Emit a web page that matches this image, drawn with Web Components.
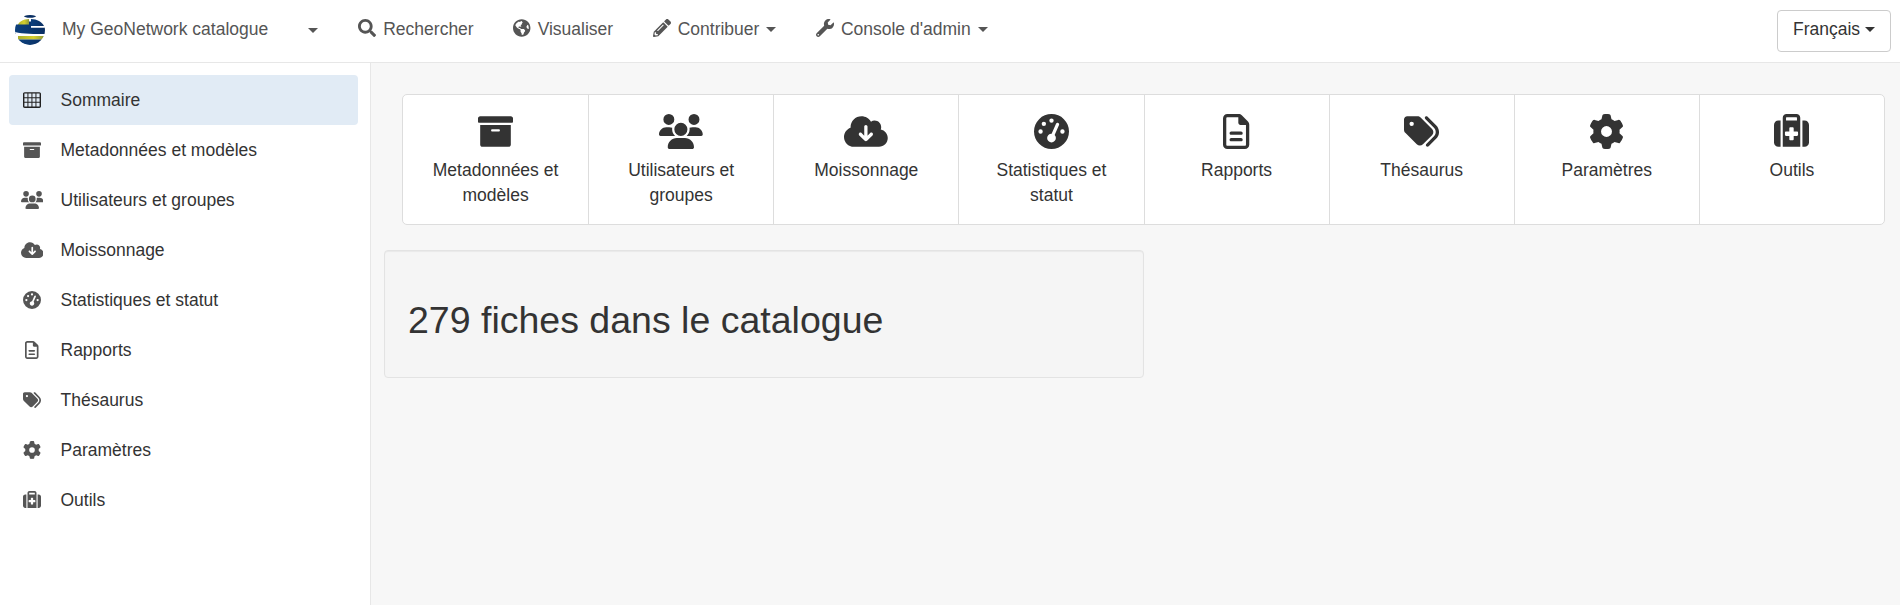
<!DOCTYPE html>
<html lang="fr">
<head>
<meta charset="utf-8">
<title>My GeoNetwork catalogue</title>
<style>
html, body { margin: 0; height: 100%; background: #f7f7f7; }
body { font: 17.5px/25px "Liberation Sans", Arial, sans-serif; color: #333; }
</style>
</head>
<body>
<gn-app>
  <gn-navbar slot="top">
    <gn-nav-item icon="search">Rechercher</gn-nav-item>
    <gn-nav-item icon="globe">Visualiser</gn-nav-item>
    <gn-nav-item icon="pencil" caret>Contribuer</gn-nav-item>
    <gn-nav-item icon="wrench" caret>Console d'admin</gn-nav-item>
  </gn-navbar>
  <gn-sidebar slot="side">
    <gn-side-item icon="table" active>Sommaire</gn-side-item>
    <gn-side-item icon="archive">Metadonnées et modèles</gn-side-item>
    <gn-side-item icon="users">Utilisateurs et groupes</gn-side-item>
    <gn-side-item icon="cloud">Moissonnage</gn-side-item>
    <gn-side-item icon="gauge">Statistiques et statut</gn-side-item>
    <gn-side-item icon="file">Rapports</gn-side-item>
    <gn-side-item icon="tags">Thésaurus</gn-side-item>
    <gn-side-item icon="gear">Paramètres</gn-side-item>
    <gn-side-item icon="case">Outils</gn-side-item>
  </gn-sidebar>
  <gn-tiles>
    <gn-tile icon="archive">Metadonnées et modèles</gn-tile>
    <gn-tile icon="users">Utilisateurs et groupes</gn-tile>
    <gn-tile icon="cloud">Moissonnage</gn-tile>
    <gn-tile icon="gauge">Statistiques et statut</gn-tile>
    <gn-tile icon="file">Rapports</gn-tile>
    <gn-tile icon="tags">Thésaurus</gn-tile>
    <gn-tile icon="gear">Paramètres</gn-tile>
    <gn-tile icon="case">Outils</gn-tile>
  </gn-tiles>
  <gn-well>279 fiches dans le catalogue</gn-well>
</gn-app>

<script>
const ICONS = {
  search: [512, 'M505 442.7L405.3 343c-4.5-4.5-10.6-7-17-7H372c27.6-35.3 44-79.7 44-128C416 93.1 322.9 0 208 0S0 93.1 0 208s93.1 208 208 208c48.3 0 92.7-16.4 128-44v16.3c0 6.4 2.5 12.5 7 17l99.7 99.7c9.4 9.4 24.6 9.4 33.9 0l28.3-28.3c9.4-9.4 9.4-24.6.1-34zM208 336c-70.7 0-128-57.2-128-128 0-70.7 57.2-128 128-128 70.7 0 128 57.2 128 128 0 70.7-57.2 128-128 128z'],
  globe: [496, 'M248 8C111.03 8 0 119.03 0 256s111.03 248 248 248 248-111.03 248-248S384.97 8 248 8zm82.29 357.6c-3.9 3.88-7.99 7.95-11.31 11.28-2.99 3-5.1 6.7-6.17 10.71-1.51 5.66-2.73 11.38-4.77 16.87l-17.39 46.85c-13.76 3-28 4.69-42.65 4.69v-27.38c1.69-12.62-7.64-36.26-22.63-51.25-6-6-9.37-14.14-9.37-22.63v-32.01c0-11.64-6.27-22.34-16.46-27.97-14.37-7.95-34.81-19.06-48.81-26.11-11.48-5.78-22.1-13.14-31.65-21.75l-.8-.72a114.792 114.792 0 0 1-18.06-20.74c-9.38-13.77-24.66-36.42-34.59-51.14 20.47-45.5 57.36-82.04 103.2-101.89l24.01 12.01C203.48 89.74 216 82.01 216 70.11v-11.3c7.99-1.29 16.12-2.11 24.39-2.42l28.3 28.3c6.25 6.25 6.25 16.38 0 22.63L264 112l-10.34 10.34c-3.12 3.12-3.12 8.19 0 11.31l4.69 4.69c3.12 3.12 3.12 8.19 0 11.31l-8 8a8.008 8.008 0 0 1-5.66 2.34h-8.99c-2.08 0-4.08.81-5.58 2.27l-9.92 9.65a8.008 8.008 0 0 0-1.58 9.31l15.59 31.19c2.66 5.32-1.21 11.58-7.15 11.58h-5.64c-1.93 0-3.79-.7-5.24-1.96l-9.28-8.06a16.017 16.017 0 0 0-15.55-3.1l-31.17 10.39a11.95 11.95 0 0 0-8.17 11.34c0 4.53 2.56 8.66 6.61 10.69l11.08 5.54c9.41 4.71 19.79 7.16 30.31 7.16s22.59 27.29 32 32h66.75c8.49 0 16.62 3.37 22.63 9.37l13.69 13.69a30.503 30.503 0 0 1 8.93 21.57 46.536 46.536 0 0 1-13.72 32.98zM417 274.25c-5.79-1.45-10.84-5-14.15-9.97l-17.98-26.97a23.97 23.97 0 0 1 0-26.62l19.59-29.38c2.32-3.47 5.5-6.29 9.24-8.15l12.98-6.49C440.2 193.59 448 223.87 448 256c0 8.67-.74 17.16-1.82 25.54L417 274.25z'],
  pencil: [512, 'M497.9 142.1l-46.1 46.1c-4.7 4.7-12.3 4.7-17 0l-111-111c-4.7-4.7-4.7-12.3 0-17l46.1-46.1c18.7-18.7 49.1-18.7 67.9 0l60.1 60.1c18.8 18.7 18.8 49.1 0 67.9zM284.2 99.8L21.6 362.4.4 483.9c-2.9 16.4 11.4 30.6 27.8 27.8l121.5-21.3 262.6-262.6c4.7-4.7 4.7-12.3 0-17l-111-111c-4.8-4.7-12.4-4.7-17.1 0zM124.1 339.9c-5.5-5.5-5.5-14.3 0-19.8l154-154c5.5-5.5 14.3-5.5 19.8 0s5.5 14.3 0 19.8l-154 154c-5.5 5.5-14.3 5.5-19.8 0zM88 424h48v36.3l-64.5 11.3-31.1-31.1L51.7 376H88v48z'],
  wrench: [512, 'M507.73 109.1c-2.24-9.03-13.54-12.09-20.12-5.51l-74.36 74.36-67.88-11.31-11.31-67.88 74.36-74.36c6.62-6.62 3.43-17.9-5.66-20.16-47.38-11.74-99.55.91-136.58 37.93-39.64 39.64-50.55 97.1-34.05 147.2L18.74 402.76c-24.99 24.99-24.99 65.51 0 90.5 24.99 24.99 65.51 24.99 90.5 0l213.21-213.21c50.12 16.71 107.47 5.68 147.37-34.22 37.07-37.07 49.7-89.32 37.91-136.73zM64 472c-13.25 0-24-10.75-24-24 0-13.26 10.75-24 24-24s24 10.74 24 24c0 13.25-10.75 24-24 24z'],
  table: [512, 'M48 32C21.500 32 0 53.500 0 80V432c0 26.500 21.500 48 48 48H464c26.500 0 48-21.500 48-48V80c0-26.500-21.500-48-48-48H48zM40 72h86v104H40V72zm114 0h86v104H154V72zm114 0h86v104H268V72zm114 0h90v104H382V72zM40 204h86v104H40V204zm114 0h86v104H154V204zm114 0h86v104H268V204zm114 0h90v104H382V204zM40 336h86v104H40V336zm114 0h86v104H154V336zm114 0h86v104H268V336zm114 0h90v104H382V336z'],
  archive: [512, 'M32 448c0 17.7 14.3 32 32 32h384c17.7 0 32-14.3 32-32V160H32v288zm160-212c0-6.6 5.4-12 12-12h104c6.6 0 12 5.4 12 12v8c0 6.6-5.4 12-12 12H204c-6.6 0-12-5.4-12-12v-8zM480 32H32C14.3 32 0 46.3 0 64v48c0 8.8 7.2 16 16 16h480c8.8 0 16-7.2 16-16V64c0-17.7-14.3-32-32-32z'],
  users: [640, 'M144 0a80 80 0 1 1 0 160A80 80 0 1 1 144 0zM512 0a80 80 0 1 1 0 160A80 80 0 1 1 512 0zM0 298.7C0 239.8 47.8 192 106.7 192h42.7c15.9 0 31 3.5 44.6 9.7c-1.3 7.2-1.9 14.7-1.9 22.3c0 38.2 16.8 72.5 43.3 96c-.2 0-.4 0-.7 0H21.3C9.6 320 0 310.4 0 298.7zM405.3 320c-.2 0-.4 0-.7 0c26.6-23.5 43.3-57.8 43.3-96c0-7.6-.7-15-1.9-22.3c13.6-6.3 28.7-9.7 44.6-9.7h42.7C592.2 192 640 239.8 640 298.7c0 11.8-9.6 21.3-21.3 21.3H405.3zM224 224a96 96 0 1 1 192 0 96 96 0 1 1 -192 0zM128 485.3C128 411.7 187.7 352 261.3 352H378.7C452.3 352 512 411.7 512 485.3c0 14.7-11.9 26.7-26.7 26.7H154.7c-14.7 0-26.7-11.9-26.7-26.7z'],
  cloud: [640, 'M144 480C64.5 480 0 415.5 0 336c0-62.8 40.2-116.2 96.2-135.9c-.1-2.7-.2-5.4-.2-8.1c0-88.4 71.6-160 160-160c59.3 0 111 32.2 138.7 80.2C409.9 102 428.3 96 448 96c53 0 96 43 96 96c0 12.2-2.3 23.8-6.4 34.6C596 238.4 640 290.1 640 352c0 70.7-57.3 128-128 128H144zm79-167l80 80c9.4 9.4 24.6 9.4 33.9 0l80-80c9.4-9.4 9.4-24.6 0-33.9s-24.6-9.4-33.9 0l-39 39V184c0-13.3-10.7-24-24-24s-24 10.7-24 24V318.1l-39-39c-9.4-9.4-24.6-9.4-33.9 0s-9.4 24.6 0 33.9z'],
  gauge: [512, 'M0 256a256 256 0 1 1 512 0A256 256 0 1 1 0 256zM288 96a32 32 0 1 0 -64 0 32 32 0 1 0 64 0zM256 416c35.3 0 64-28.7 64-64c0-17.4-6.9-33.1-18.1-44.6L366 161.7c5.3-12.1-.2-26.3-12.3-31.6s-26.3 .2-31.6 12.3L257.9 288c-.6 0-1.3 0-1.9 0c-35.3 0-64 28.7-64 64s28.7 64 64 64zM176 144a32 32 0 1 0 -64 0 32 32 0 1 0 64 0zM96 288a32 32 0 1 0 0-64 32 32 0 1 0 0 64zm352-32a32 32 0 1 0 -64 0 32 32 0 1 0 64 0z'],
  file: [384, 'M64 464c-8.8 0-16-7.2-16-16V64c0-8.8 7.2-16 16-16H224v80c0 17.7 14.3 32 32 32h80V448c0 8.8-7.2 16-16 16H64zM64 0C28.7 0 0 28.7 0 64V448c0 35.3 28.7 64 64 64H320c35.3 0 64-28.7 64-64V154.5c0-17-6.7-33.3-18.7-45.3L274.7 18.7C262.7 6.7 246.5 0 229.5 0H64zm56 256c-13.3 0-24 10.7-24 24s10.7 24 24 24H264c13.3 0 24-10.7 24-24s-10.7-24-24-24H120zm0 96c-13.3 0-24 10.7-24 24s10.7 24 24 24H264c13.3 0 24-10.7 24-24s-10.7-24-24-24H120z'],
  tags: [512, 'M345 39.1L472.8 168.4c52.4 53 52.4 138.2 0 191.2L360.8 472.9c-9.3 9.4-24.5 9.5-33.9 .2s-9.5-24.5-.2-33.9L438.6 325.9c33.9-34.3 33.9-89.4 0-123.7L310.9 72.9c-9.3-9.4-9.2-24.6 .2-33.9s24.6-9.2 33.9 .2zM0 229.5V80C0 53.5 21.5 32 48 32H197.5c17 0 33.3 6.7 45.3 18.7l168 168c25 25 25 65.5 0 90.5L277.3 442.7c-25 25-65.5 25-90.5 0l-168-168C6.7 262.7 0 246.5 0 229.5zM144 144a32 32 0 1 0 -64 0 32 32 0 1 0 64 0z'],
  gear: [512, 'M495.9 166.6c3.2 8.7 .5 18.4-6.4 24.6l-43.3 39.4c1.1 8.3 1.7 16.8 1.7 25.4s-.6 17.1-1.7 25.4l43.3 39.4c6.9 6.2 9.6 15.9 6.4 24.6c-4.4 11.9-9.7 23.3-15.8 34.3l-4.7 8.1c-6.6 11-14 21.4-22.1 31.2c-5.9 7.2-15.7 9.6-24.5 6.8l-55.7-17.7c-13.4 10.3-28.2 18.9-44 25.4l-12.5 57.1c-2 9.1-9 16.3-18.2 17.8c-13.8 2.3-28 3.5-42.5 3.5s-28.7-1.2-42.5-3.5c-9.2-1.5-16.2-8.7-18.2-17.8l-12.5-57.1c-15.8-6.5-30.6-15.1-44-25.4L83.1 425.9c-8.8 2.8-18.6 .3-24.5-6.8c-8.1-9.8-15.5-20.2-22.1-31.2l-4.7-8.1c-6.1-11-11.4-22.4-15.8-34.3c-3.2-8.7-.5-18.4 6.4-24.6l43.3-39.4C64.6 273.1 64 264.6 64 256s.6-17.1 1.7-25.4L22.4 191.2c-6.9-6.2-9.6-15.9-6.4-24.6c4.4-11.9 9.7-23.3 15.8-34.3l4.7-8.1c6.6-11 14-21.4 22.1-31.2c5.9-7.2 15.7-9.6 24.5-6.8l55.7 17.7c13.4-10.3 28.2-18.9 44-25.4l12.5-57.1c2-9.1 9-16.3 18.2-17.8C227.3 1.2 241.5 0 256 0s28.7 1.2 42.5 3.5c9.2 1.5 16.2 8.7 18.2 17.8l12.5 57.1c15.8 6.5 30.6 15.1 44 25.4l55.7-17.7c8.8-2.8 18.6-.3 24.5 6.8c8.1 9.8 15.5 20.2 22.1 31.2l4.7 8.1c6.1 11 11.4 22.4 15.8 34.3zM256 336a80 80 0 1 0 0-160 80 80 0 1 0 0 160z'],
  case: [512, 'M184 48H328c4.4 0 8 3.6 8 8V96H176V56c0-4.4 3.6-8 8-8zm-56 8V96v32V480H384V128 96 56c0-30.9-25.1-56-56-56H184c-30.9 0-56 25.1-56 56zM96 96H64C28.7 96 0 124.7 0 160V416c0 35.3 28.7 64 64 64H96V96zM416 480h32c35.3 0 64-28.7 64-64V160c0-35.3-28.7-64-64-64H416V480zM224 208c0-8.8 7.2-16 16-16h32c8.8 0 16 7.2 16 16v48h48c8.8 0 16 7.2 16 16v32c0 8.8-7.2 16-16 16H288v48c0 8.8-7.2 16-16 16H240c-8.8 0-16-7.2-16-16V320H176c-8.8 0-16-7.2-16-16V272c0-8.8 7.2-16 16-16h48V208z']
};

function svgIcon(name, height) {
  const [w, d] = ICONS[name];
  return `<svg viewBox="0 0 ${w} 512" width="${height * w / 512}" height="${height}" fill="currentColor" aria-hidden="true"><path d="${d}"/></svg>`;
}

const CARET = '<i style="display:inline-block;width:0;height:0;border-top:5px solid currentColor;border-left:5px solid transparent;border-right:5px solid transparent"></i>';

class GnApp extends HTMLElement {
  constructor() {
    super();
    this.attachShadow({ mode: 'open' }).innerHTML = `<style>
      :host { display: flex; flex-direction: column; height: 605px; overflow: hidden; }
      .body { display: flex; flex: 1; min-height: 0; }
      main { flex: 1; min-width: 0; padding-top: 31px; }
    </style>
    <slot name="top"></slot>
    <div class="body"><slot name="side"></slot><main><slot></slot></main></div>`;
  }
}

class GnNavbar extends HTMLElement {
  constructor() {
    super();
    this.attachShadow({ mode: 'open' }).innerHTML = `<style>
      :host { display: flex; align-items: center; height: 62px; flex: none; background: #fff; border-bottom: 1px solid #e7e7e7; color: #555; padding: 0 9px 0 15px; }
      .logo { width: 30px; height: 30px; flex: none; margin: 0 17px 2px 0; }
      .brand { margin-bottom: 4px; }
      .caret { display: flex; margin: 0 40px 1px 40px; }
      .items { display: flex; gap: 39.5px; flex: 1; margin-bottom: 4px; }
      button { font: inherit; color: #333; background: #fff; border: 1px solid #ccc; border-radius: 4px; height: 42px; width: 114px; padding: 0 0 3px; display: flex; align-items: center; justify-content: center; gap: 5px; }
    </style>
    <svg class="logo" viewBox="0 0 30 30" aria-hidden="true">
      <defs>
        <linearGradient id="b" x1="0" x2="1"><stop offset="0" stop-color="#0c3f7c"/><stop offset="1" stop-color="#0a2f63"/></linearGradient>
        <linearGradient id="y" x1="0" x2="1"><stop offset="0" stop-color="#a9ae2c"/><stop offset=".6" stop-color="#d6cf2e"/><stop offset="1" stop-color="#8f9a3a"/></linearGradient>
        <clipPath id="c"><circle cx="15" cy="15" r="15"/></clipPath>
      </defs>
      <g clip-path="url(#c)">
        <rect width="30" height="30" fill="#fff"/>
        <ellipse cx="15" cy="1" rx="6" ry="1.800" fill="#0a2f63"/>
        <path d="M2 12C3 7 8 4 14 4V10H2z" fill="url(#y)"/>
        <path d="M16 4C22 4 27 7 29 11H16z" fill="url(#b)"/>
        <path d="M0 9.500H14V6.500H16V12.500H30V19H0z" fill="url(#b)"/>
        <path d="M16 11H29L30 12.500H16z" fill="#fff"/>
        <path d="M0 17C8 19 20 19 30 19V20.500H0z" fill="#fff"/>
        <path d="M3 21H29L28.500 24.500H3z" fill="url(#y)"/>
        <path d="M3 24.500H29C26 28 21 30 15 30S6 28 3 24.500z" fill="url(#b)"/>
      </g>
    </svg>
    <span class="brand">My GeoNetwork catalogue</span>
    <span class="caret">${CARET}</span>
    <div class="items"><slot></slot></div>
    <button type="button">Français ${CARET}</button>`;
  }
}

class GnNavItem extends HTMLElement {
  constructor() {
    super();
    this.attachShadow({ mode: 'open' });
  }
  connectedCallback() {
    const caret = this.hasAttribute('caret') ? `<span class="caret">${CARET}</span>` : '';
    this.shadowRoot.innerHTML = `<style>
      :host { display: inline-flex; align-items: center; gap: 7px; color: #555; }
      svg { display: block; margin-bottom: 2px; }
      .caret { display: flex; margin-left: 0; }
    </style>${svgIcon(this.getAttribute('icon'), 18)}<span><slot></slot></span>${caret}`;
  }
}

class GnSidebar extends HTMLElement {
  constructor() {
    super();
    this.attachShadow({ mode: 'open' }).innerHTML = `<style>
      :host { display: flex; flex-direction: column; flex: none; box-sizing: border-box; width: 371px; background: #fff; border-right: 1px solid #e7e7e7; padding: 12px 12px 0 9px; }
    </style><slot></slot>`;
  }
}

class GnSideItem extends HTMLElement {
  constructor() {
    super();
    this.attachShadow({ mode: 'open' });
  }
  connectedCallback() {
    this.shadowRoot.innerHTML = `<style>
      :host { display: flex; align-items: center; height: 50px; flex: none; border-radius: 4px; }
      :host([active]) { background: #e1ebf5; }
      .ico { width: 46px; margin-right: 5.5px; display: flex; justify-content: center; color: #555; }
      :host([active]) .ico { color: #222; }
      svg { display: block; }
    </style><span class="ico">${svgIcon(this.getAttribute('icon'), 18)}</span><span><slot></slot></span>`;
  }
}

class GnTiles extends HTMLElement {
  constructor() {
    super();
    this.attachShadow({ mode: 'open' }).innerHTML = `<style>
      :host { display: grid; grid-template-columns: repeat(8, 1fr); margin: 0 15px 0 31px; background: #fff; border: 1px solid #ddd; border-radius: 5px; height: 131px; box-sizing: border-box; }
    </style><slot></slot>`;
  }
}

class GnTile extends HTMLElement {
  constructor() {
    super();
    this.attachShadow({ mode: 'open' });
  }
  connectedCallback() {
    this.shadowRoot.innerHTML = `<style>
      :host { display: flex; flex-direction: column; align-items: center; box-sizing: border-box; padding: 19px 15px 0; border-left: 1px solid #ddd; text-align: center; color: #333; }
      :host(:first-child) { border-left: 0; }
      svg { display: block; margin-bottom: 9px; }
    </style>${svgIcon(this.getAttribute('icon'), 35)}<span><slot></slot></span>`;
  }
}

class GnWell extends HTMLElement {
  constructor() {
    super();
    this.attachShadow({ mode: 'open' }).innerHTML = `<style>
      :host { display: block; box-sizing: border-box; width: 760px; height: 128px; margin: 25px 0 0 13px; padding: 23.75px 23px; background: #f5f5f5; border: 1px solid #e3e3e3; border-radius: 4px; box-shadow: inset 0 1px 1px rgba(0,0,0,.05); }
      h1 { margin: 25px 0 12.5px; font-size: 37.5px; font-weight: 500; line-height: 41.25px; color: #333; }
    </style><h1><slot></slot></h1>`;
  }
}

customElements.define('gn-app', GnApp);
customElements.define('gn-navbar', GnNavbar);
customElements.define('gn-nav-item', GnNavItem);
customElements.define('gn-sidebar', GnSidebar);
customElements.define('gn-side-item', GnSideItem);
customElements.define('gn-tiles', GnTiles);
customElements.define('gn-tile', GnTile);
customElements.define('gn-well', GnWell);
</script>
</body>
</html>
